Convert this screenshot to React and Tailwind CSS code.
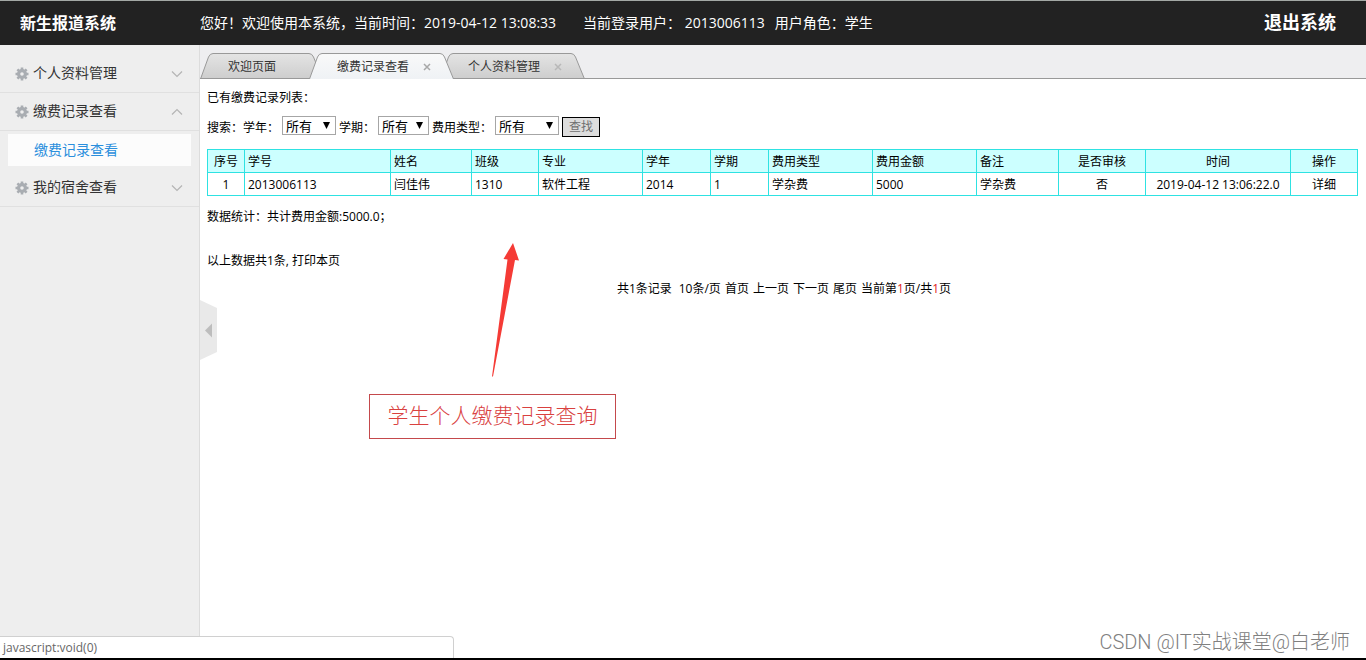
const columns = [
  { title: "序号", value: "1", width: "w-[37px]", center: true },
  { title: "学号", value: "2013006113", width: "w-[146px]" },
  { title: "姓名", value: "闫佳伟", width: "w-[81px]" },
  { title: "班级", value: "1310", width: "w-[67px]" },
  { title: "专业", value: "软件工程", width: "w-[104px]" },
  { title: "学年", value: "2014", width: "w-[68px]" },
  { title: "学期", value: "1", width: "w-[58px]" },
  { title: "费用类型", value: "学杂费", width: "w-[104px]" },
  { title: "费用金额", value: "5000", width: "w-[104px]" },
  { title: "备注", value: "学杂费", width: "w-[82px]" },
  { title: "是否审核", value: "否", width: "w-[87px]", center: true },
  { title: "时间", value: "2019-04-12 13:06:22.0", width: "w-[145px]", center: true },
  { title: "操作", value: "详细", width: "w-[67px]", center: true, link: true },
];

function Chevron({ up }) {
  return (
    <svg viewBox="0 0 12 8" className="h-2 w-3 fill-none stroke-[#b4b4b4]" strokeWidth="1.2">
      <path d={up ? "M1 6.5 6 1.5l5 5" : "M1 1.5l5 5 5-5"} />
    </svg>
  );
}

function Gear() {
  return (
    <svg viewBox="0 0 14 14" className="size-[14px] fill-none stroke-[#a9adb2]">
      <path
        strokeWidth="2.6"
        d="M7 .5V3M7 11v2.500M.5 7H3M11 7h2.500M2.400 2.400 4.200 4.200M9.800 9.800l1.800 1.800M11.600 2.400 9.800 4.200M4.200 9.800l-1.800 1.800"
      />
      <circle cx="7" cy="7" r="3.400" strokeWidth="3.200" />
    </svg>
  );
}

function MenuItem({ label, open }) {
  return (
    <button
      type="button"
      aria-expanded={!!open}
      className="flex h-[38px] w-full items-center border-b border-[#e0e0e0] pr-4 pl-[15px] text-left text-sm text-[#333]"
    >
      <Gear />
      <span className="ml-1 flex-1 pb-[2px]">{label}</span>
      <Chevron up={open} />
    </button>
  );
}

function Tab({ label, active, closable, width }) {
  return (
    <div className={`relative h-[26px] ${width} ${active ? "z-10" : ""} not-first:-ml-[14px]`}>
      <svg
        viewBox={closable ? "0 0 145 26" : "0 0 123 26"}
        preserveAspectRatio="none"
        className="absolute inset-0 h-full w-full"
      >
        <defs>
          <linearGradient id="tab-idle" x1="0" y1="0" x2="0" y2="1">
            <stop offset="0" stopColor="#e4e4e4" />
            <stop offset="1" stopColor="#cdcdcd" />
          </linearGradient>
          <linearGradient id="tab-active" x1="0" y1="0" x2="0" y2="1">
            <stop offset="0" stopColor="#f9f9f9" />
            <stop offset="1" stopColor="#eff2f5" />
          </linearGradient>
        </defs>
        <path
          d={
            closable
              ? "M.5 26 8.5 4Q10 .5 13 .5H131Q134 .5 135.500 4L144.500 26"
              : "M.5 26 8.500 4Q10 .5 13 .5H109Q112 .5 113.500 4L122.500 26"
          }
          fill={active ? "url(#tab-active)" : "url(#tab-idle)"}
          stroke="#999"
        />
        {!active && <path d="M0 25.500H145" stroke="#999" />}
      </svg>
      <div className="relative flex h-full items-center pt-[2px] pl-7 text-xs text-[#333]">
        <button type="button">{label}</button>
        {closable && (
          <button type="button" aria-label={`关闭${label}`} className="ml-[14px]">
            <svg
              viewBox="0 0 8 8"
              className={active ? "size-2 stroke-[#a8a8a8]" : "size-2 stroke-[#b8b8b8]"}
              strokeWidth="1.500"
            >
              <path d="M1 1l6 6M7 1 1 7" />
            </svg>
          </button>
        )}
      </div>
    </div>
  );
}

function Filter({ label, id, width }) {
  return (
    <div className="flex items-start gap-[3px]">
      <label htmlFor={id} className="pt-[3px]">{label}</label>
      <span className={`relative ${width}`}>
        <select
          id={id}
          className="block h-[19px] w-full appearance-none border border-[#a6a6a6] bg-white pt-px pl-[3px] text-[13px] leading-[17px] text-black"
        >
          <option>所有</option>
        </select>
        <svg viewBox="0 0 7 7" className="pointer-events-none absolute top-[6px] right-[6px] size-[7px] fill-black">
          <path d="M0 0h7L3.500 7z" />
        </svg>
      </span>
    </div>
  );
}

export default function App() {
  return (
    <div className="relative flex min-h-screen flex-col bg-white font-['Open_Sans','Noto_Sans_CJK_SC',sans-serif] text-xs leading-[18px] text-black">
      <header className="flex h-[45px] items-center border-t border-[#a3a8a5] bg-[#222] text-sm text-white">
        <h1 className="w-[200px] pl-5 text-base font-bold">新生报道系统</h1>
        <p className="flex-1 whitespace-pre">
          <span>您好！欢迎使用本系统，当前时间：2019-04-12 13:08:33</span>
          <span className="ml-[27px]">当前登录用户： 2013006113</span>
          <span className="ml-[10px]">用户角色：学生</span>
        </p>
        <a href="#logout" className="pr-[30px] pb-[2px] text-lg font-bold">退出系统</a>
      </header>

      <div className="flex flex-1">
        <aside className="w-[200px] border-r border-[#dcdcdc] bg-[#eee] pt-[10px]">
          <nav>
            <MenuItem label="个人资料管理" />
            <MenuItem label="缴费记录查看" open />
            <div className="px-2 py-[3px]">
              <a href="#records" className="flex h-8 items-center bg-[#fcfcfc] pl-[26px] text-sm text-[#2b8fdd]">
                缴费记录查看
              </a>
            </div>
            <MenuItem label="我的宿舍查看" />
          </nav>
        </aside>

        <main className="min-w-0 flex-1">
          <div className="flex h-[34px] items-end border-b border-[#999] bg-[#eeeef0]">
            <div className="-mb-px flex">
              <Tab label="欢迎页面" width="w-[123px]" />
              <Tab label="缴费记录查看" width="w-[145px]" active closable />
              <Tab label="个人资料管理" width="w-[145px]" closable />
            </div>
          </div>

          <div className="pt-[10px] pr-[9px] pl-[7px]">
            <p>已有缴费记录列表：</p>
            <form className="mt-[9px] flex items-start gap-[3px]">
              <div className="flex items-start">
                <span className="pt-[3px]">搜索：</span>
                <Filter label="学年：" id="year" width="w-[54px]" />
              </div>
              <Filter label="学期：" id="term" width="w-[51px]" />
              <Filter label="费用类型：" id="type" width="w-[64px]" />
              <button
                type="button"
                className="mt-px h-5 w-[38px] border border-black bg-[#ddd] text-[#707070]"
              >
                查找
              </button>
            </form>

            <table className="mt-3 w-full table-fixed border-collapse">
              <thead>
                <tr className="h-[23px] bg-[#ccffff]">
                  {columns.map((c) => (
                    <th
                      key={c.title}
                      className={`${c.width} border border-[#2ee2e2] px-[3px] pt-[2px] font-normal whitespace-nowrap ${c.center ? "text-center" : "text-left"}`}
                    >
                      {c.title}
                    </th>
                  ))}
                </tr>
              </thead>
              <tbody>
                <tr className="h-[23px]">
                  {columns.map((c) => (
                    <td
                      key={c.title}
                      className={`border border-[#2ee2e2] px-[3px] pt-[2px] whitespace-nowrap ${c.center ? "text-center" : "text-left"}`}
                    >
                      {c.link ? <a href="#detail">{c.value}</a> : c.value}
                    </td>
                  ))}
                </tr>
              </tbody>
            </table>

            <p className="mt-3">数据统计：共计费用金额:5000.0；</p>
            <p className="mt-[26px]">
              以上数据共1条, <a href="#print">打印本页</a>
            </p>
            <div className="mt-[10px] flex justify-center gap-1 pl-1">
              <span className="mr-[3px]">共1条记录</span>
              <span>10条/页</span>
              <a href="#first">首页</a>
              <a href="#prev">上一页</a>
              <a href="#next">下一页</a>
              <a href="#last">尾页</a>
              <span>
                当前第<span className="text-[#e02020]">1</span>页/共<span className="text-[#e02020]">1</span>页
              </span>
            </div>
          </div>
        </main>
      </div>

      <footer className="h-[2px] bg-black" />

      <button type="button" aria-label="收起菜单" className="absolute top-[300px] left-[200px]">
        <svg viewBox="0 0 17 60" className="h-[60px] w-[17px]">
          <path d="M0 0 17 8V52L0 60z" fill="#e9e9e9" />
          <path d="M5 30.500 12 23.500V37.500z" fill="#bdbdbd" />
        </svg>
      </button>

      <svg viewBox="0 0 30 136" className="absolute top-[242px] left-[491px] h-[136px] w-[30px]">
        <path d="M22 1 28 18.500 24 18 2 134.500H1L16.500 17.500 12.500 17z" fill="#f53b36" />
      </svg>
      <div className="absolute top-[394px] left-[369px] flex h-[45px] w-[247px] items-center justify-center border border-[#c4494c] pb-[3px] text-[21px] font-light text-[#d9413f]">
        学生个人缴费记录查询
      </div>

      <div className="absolute bottom-[2px] left-0 h-[22px] w-[454px] rounded-tr border-t border-r border-[#d0d0d0] bg-white pl-[3px] leading-[21px] text-[#666]">
        javascript:void(0)
      </div>
      <div className="absolute right-4 bottom-1 font-['Roboto','Noto_Sans_CJK_SC',sans-serif] text-xl font-light text-[#808080]">
        CSDN @IT实战课堂@白老师
      </div>
    </div>
  );
}
